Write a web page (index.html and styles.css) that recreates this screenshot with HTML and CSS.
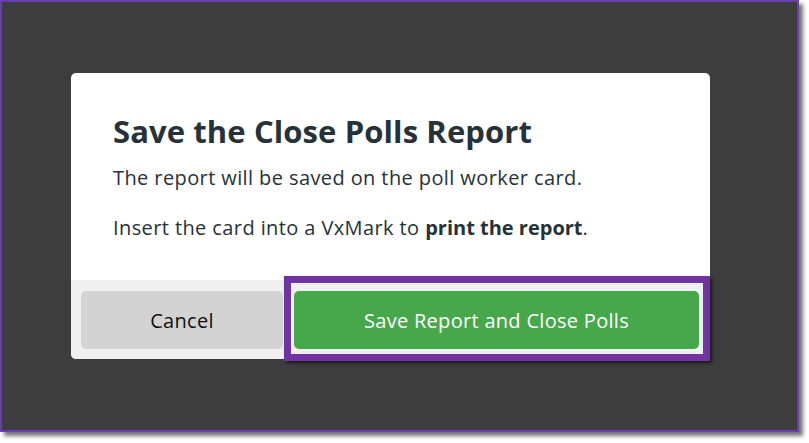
FILE: index.html
```html
<!DOCTYPE html>
<html lang="en">
<head>
<meta charset="utf-8">
<title>Save the Close Polls Report</title>
<link rel="stylesheet" href="styles.css">
</head>
<body>
<div class="frame">
  <div class="modal">
    <div class="modal-body">
      <h1 class="title">Save the Close Polls Report</h1>
      <p class="text">The report will be saved on the poll worker card.</p>
      <p class="text">Insert the card into a VxMark to <strong>print the report</strong>.</p>
    </div>
    <div class="modal-footer">
      <button class="btn btn-cancel">Cancel</button>
      <div class="btn-wrap">
        <button class="btn btn-primary">Save Report and Close Polls</button>
        <div class="highlight"></div>
      </div>
    </div>
  </div>
</div>
</body>
</html>
```
FILE: styles.css
```css
html, body {
  margin: 0;
  padding: 0;
  background: #ffffff;
}
body {
  width: 809px;
  height: 443px;
  overflow: hidden;
  font-family: "Open Sans", "Noto Sans", sans-serif;
}
.frame {
  box-sizing: border-box;
  width: 799px;
  height: 432px;
  border: 2px solid #6b3db4;
  background: #3c3d3c;
  box-shadow: 4px 4px 4px rgba(0, 0, 0, 0.55);
  display: flex;
  align-items: center;
  padding-left: 69px;
}
.modal {
  width: 639px;
  height: 286px;
  background: #ffffff;
  border-radius: 5px;
  display: flex;
  flex-direction: column;
  overflow: visible;
}
.modal-body {
  flex: 1;
  padding: 38px 42px 0 42px;
  color: #263238;
}
.title {
  margin: 0 0 2px 0;
  font-size: 31px;
  line-height: 40px;
  font-weight: 700;
  letter-spacing: 0.1px;
}
.text {
  margin: 0;
  font-size: 20px;
  line-height: 50px;
  letter-spacing: 0.4px;
}
.text strong {
  font-weight: 700;
  letter-spacing: 0;
}
.modal-footer {
  height: 79px;
  box-sizing: border-box;
  background: #f0f0f0;
  border-radius: 0 0 5px 5px;
  padding: 11px 11px 10px 10px;
  display: flex;
  gap: 11px;
}
.btn {
  border: none;
  border-radius: 5px;
  font-family: inherit;
  font-size: 20px;
  letter-spacing: 0.3px;
  height: 58px;
  padding: 0;
}
.btn-cancel {
  width: 202px;
  background: #d3d3d3;
  color: #111111;
}
.btn-wrap {
  position: relative;
  flex: 1;
  display: flex;
}
.btn-primary {
  flex: 1;
  background: #47a74b;
  color: #ffffff;
}
.highlight {
  position: absolute;
  left: -10px;
  top: -15px;
  right: -11px;
  bottom: -12px;
  border: 7px solid #7133a2;
  box-shadow: 2px 2px 3px rgba(0, 0, 0, 0.6);
  pointer-events: none;
}
```
